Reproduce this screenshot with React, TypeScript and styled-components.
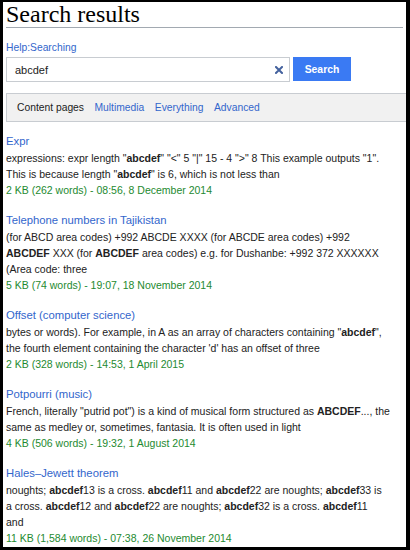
import React from "react";
import styled, { createGlobalStyle } from "styled-components";

const Global = createGlobalStyle`
  html, body { margin: 0; padding: 0; background: #000; }
  body { font-family: "Liberation Sans", Arial, sans-serif; }
`;

const Page = styled.div`
  margin: 2px 4px 0 3px;
  height: 545px;
  overflow: hidden;
  background: #fff;
  padding: 0 2px 0 3px;
  box-sizing: border-box;
`;

const Heading = styled.h1`
  margin: 0;
  padding: 0 0 1px 0;
  font-family: "Liberation Serif", "Times New Roman", serif;
  font-weight: normal;
  font-size: 24px;
  line-height: 24px;
  color: #000;
  border-bottom: 1px solid #a2a9b1;
  margin-right: 1px;
`;

const HelpLink = styled.a`
  display: block;
  margin-top: 13px;
  font-size: 10.3px;
  line-height: 13px;
  color: #3366cc;
  text-decoration: none;
`;

const SearchRow = styled.div`
  display: flex;
  gap: 3px;
  margin-top: 3px;
`;

const InputBox = styled.div`
  width: 284px;
  height: 25px;
  box-sizing: border-box;
  border: 1px solid #c8ccd1;
  display: flex;
  align-items: center;
  padding: 0 6px 0 8px;
  font-size: 11px;
  color: #222;
`;

const InputText = styled.span`
  flex: 1;
`;

const ClearIcon = styled.svg`
  width: 8px;
  height: 8px;
  display: block;
`;

const SearchButton = styled.button`
  width: 58px;
  height: 24px;
  border: none;
  background: #3a7af3;
  color: #fff;
  font-family: "Liberation Sans", Arial, sans-serif;
  font-weight: bold;
  font-size: 10.4px;
  padding: 0;
`;

const Tabs = styled.nav`
  margin-top: 11px;
  height: 29px;
  box-sizing: border-box;
  display: flex;
  align-items: center;
  gap: 10.5px;
  padding-left: 10px;
  background: #f1f1f1;
  border: 1px solid #c8ccd1;
  border-right: none;
  margin-right: -2px;
`;

const Tab = styled.a<{ $active?: boolean }>`
  font-size: 10.3px;
  color: ${(p) => (p.$active ? "#222" : "#3366cc")};
  text-decoration: none;
`;

const Results = styled.ul`
  list-style: none;
  margin: 10.5px 0 0 0;
  padding: 0;
`;

const Result = styled.li`
  margin-bottom: 14px;
`;

const ResultTitle = styled.a`
  display: block;
  font-size: 11.3px;
  line-height: 17px;
  color: #3366cc;
  text-decoration: none;
`;

const SnippetLine = styled.div`
  font-size: 10.5px;
  line-height: 16px;
  color: #222;
  white-space: nowrap;
`;

const Meta = styled.div`
  font-size: 10.5px;
  line-height: 16px;
  color: #1e8a30;
  white-space: nowrap;
`;

type R = { title: string; lines: string[]; meta: string };

const results: R[] = [
  {
    title: "Expr",
    lines: [
      'expressions: expr length "**abcdef**" "<" 5 "|" 15 - 4 ">" 8 This example outputs "1".',
      'This is because length "**abcdef**" is 6, which is not less than',
    ],
    meta: "2 KB (262 words) - 08:56, 8 December 2014",
  },
  {
    title: "Telephone numbers in Tajikistan",
    lines: [
      "(for ABCD area codes) +992 ABCDE XXXX (for ABCDE area codes) +992",
      "**ABCDEF** XXX (for **ABCDEF** area codes) e.g. for Dushanbe: +992 372 XXXXXX",
      "(Area code: three",
    ],
    meta: "5 KB (74 words) - 19:07, 18 November 2014",
  },
  {
    title: "Offset (computer science)",
    lines: [
      'bytes or words). For example, in A as an array of characters containing "**abcdef**",',
      "the fourth element containing the character 'd' has an offset of three",
    ],
    meta: "2 KB (328 words) - 14:53, 1 April 2015",
  },
  {
    title: "Potpourri (music)",
    lines: [
      'French, literally "putrid pot") is a kind of musical form structured as **ABCDEF**..., the',
      "same as medley or, sometimes, fantasia. It is often used in light",
    ],
    meta: "4 KB (506 words) - 19:32, 1 August 2014",
  },
  {
    title: "Hales–Jewett theorem",
    lines: [
      "noughts; **abcdef**13 is a cross. **abcdef**11 and **abcdef**22 are noughts; **abcdef**33 is",
      "a cross. **abcdef**12 and **abcdef**22 are noughts; **abcdef**32 is a cross. **abcdef**11",
      "and",
    ],
    meta: "11 KB (1,584 words) - 07:38, 26 November 2014",
  },
];

const renderLine = (s: string) =>
  s.split("**").map((part, i) =>
    i % 2 === 1 ? <b key={i}>{part}</b> : <React.Fragment key={i}>{part}</React.Fragment>
  );

export default function App() {
  return (
    <>
      <Global />
      <Page>
        <Heading>Search results</Heading>
        <HelpLink href="#">Help:Searching</HelpLink>
        <SearchRow>
          <InputBox>
            <InputText>abcdef</InputText>
            <ClearIcon viewBox="0 0 8 8">
              <path d="M1 1 L7 7 M7 1 L1 7" stroke="#44629e" strokeWidth="2" strokeLinecap="square" />
            </ClearIcon>
          </InputBox>
          <SearchButton>Search</SearchButton>
        </SearchRow>
        <Tabs>
          <Tab $active>Content pages</Tab>
          <Tab href="#">Multimedia</Tab>
          <Tab href="#">Everything</Tab>
          <Tab href="#">Advanced</Tab>
        </Tabs>
        <Results>
          {results.map((r) => (
            <Result key={r.title}>
              <ResultTitle href="#">{r.title}</ResultTitle>
              {r.lines.map((l, i) => (
                <SnippetLine key={i}>{renderLine(l)}</SnippetLine>
              ))}
              <Meta>{r.meta}</Meta>
            </Result>
          ))}
        </Results>
      </Page>
    </>
  );
}
